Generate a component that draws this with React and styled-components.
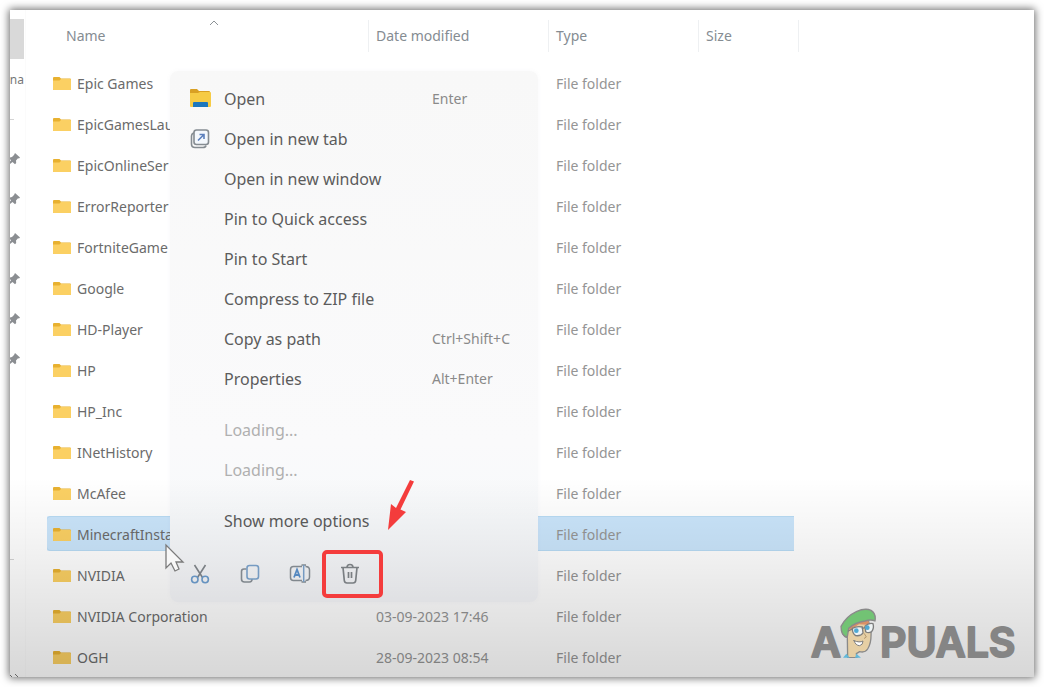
import React from "react";
import styled, { createGlobalStyle, css } from "styled-components";

const GlobalStyle = createGlobalStyle`
  *, *::before, *::after { box-sizing: border-box; }
  body { margin: 0; background: #fff; font-family: "Noto Sans", "Open Sans", sans-serif; }
  button { font: inherit; color: inherit; background: none; border: 0; padding: 0; text-align: left; cursor: pointer; }
`;

const Page = styled.div`
  padding: 10px;
`;

const Window = styled.main`
  position: relative;
  isolation: isolate;
  display: flex;
  min-height: calc(100vh - 20px);
  overflow: hidden;
  background: #fff;
`;

const Frame = styled.div`
  box-shadow: 0 0 8px 1px rgba(0, 0, 0, 0.6);
`;

const Shade = styled.div`
  position: absolute;
  inset: 0;
  pointer-events: none;
  background: linear-gradient(transparent 70%, rgba(0, 0, 0, 0.06) 82%, rgba(0, 0, 0, 0.155));
`;

const Sidebar = styled.nav`
  display: flex;
  flex-direction: column;
  flex: none;
  width: 16px;
  margin-right: 21px;
  padding-top: 9px;
  border-right: 1px solid #fbfbfb;
  overflow: hidden;
`;

const SideItem = styled.div`
  display: flex;
  align-items: center;
  justify-content: ${(p) => (p.$end ? "flex-end" : "flex-start")};
  flex: none;
  width: 14px;
  height: ${(p) => (p.$span || 1) * 40}px;
  background: ${(p) => (p.$active ? "#d9d9d9" : "none")};
  font-size: 12px;
  color: #777;
`;

const Dash = styled.span`
  width: 4px;
  height: 1px;
  background: #d4d4d4;
`;

const SideFoot = styled.div`
  margin-top: auto;
  height: 4px;
`;

const Files = styled.table`
  flex: none;
  align-self: flex-start;
  width: 752px;
  table-layout: fixed;
  border-collapse: separate;
  border-spacing: 0;
`;

const HeadCell = styled.th`
  height: 52px;
  padding: 0;
  font-size: 14px;
  font-weight: 400;
  color: #858c92;
`;

const HeadButton = styled.button`
  position: relative;
  display: flex;
  align-items: center;
  width: 100%;
  height: 32px;
  padding-bottom: 2px;
  padding-left: ${(p) => (p.$wide ? 19 : 7)}px;
  border-right: 1px solid #eef0f2;
`;

const SortMark = styled.svg`
  position: absolute;
  left: 50%;
  top: -1px;
`;

const selected = css`
  background-color: #cae5fb;
  box-shadow: inset 0 1px #b8dbf4, inset 0 -1px #b8dbf4;
`;

const Row = styled.tr`
  td { ${(p) => p.$selected && selected} }
`;

const Cell = styled.td`
  height: 41px;
  padding: 2px 0 0 7px;
  border: 0 solid transparent;
  border-width: 3px 0;
  background-clip: padding-box;
  font-size: 14px;
  line-height: 20px;
  color: #959595;
  &:last-child { border-right-width: 5px; }
`;

const NameCell = styled(Cell)`
  padding-left: 6px;
  color: #6b6b6b;
  border-radius: 4px 0 0 4px;
`;

const FileName = styled.span`
  display: flex;
  align-items: center;
  gap: 6px;
  white-space: nowrap;
`;

const Menu = styled.div`
  position: absolute;
  left: 160px;
  top: 61px;
  display: flex;
  flex-direction: column;
  width: 368px;
  padding: 8px 0;
  border-radius: 8px;
  background: linear-gradient(#f8f8f8, #fafafb 70%, #f7f9fb 85%, #f7f8fb);
  box-shadow: 0 0 4px rgba(140, 140, 150, 0.05);
`;

const MenuGroup = styled.div`
  display: flex;
  flex-direction: column;
  margin-bottom: 11px;
`;

const MenuItem = styled.button`
  display: grid;
  grid-template-columns: 34px 208px 1fr;
  align-items: center;
  height: 40px;
  padding-left: 20px;
  font-size: 16px;
  line-height: 24px;
  color: ${(p) => (p.disabled ? "#b0b0b0" : "#5c5c5c")};
`;

const MenuIcon = styled.span`
  display: flex;
`;

const Shortcut = styled.kbd`
  font-family: inherit;
  font-size: 14px;
  color: #8a8a8a;
`;

const Actions = styled.div`
  display: flex;
  padding: 2px 0 0 5px;
`;

const ActionButton = styled.button`
  position: relative;
  display: flex;
  align-items: center;
  justify-content: center;
  width: 50px;
  height: 40px;
`;

const RedBox = styled.span`
  position: absolute;
  z-index: 1;
  inset: -4px -8px -4px -3px;
  border: 4px solid #f43c3c;
  border-radius: 5px;
`;

const Overlay = styled.svg`
  position: absolute;
  left: ${(p) => p.$x}px;
  top: ${(p) => p.$y}px;
  overflow: visible;
`;

const Brand = styled.svg`
  position: absolute;
  right: 15px;
  bottom: 19px;
  overflow: visible;
`;

const BrandText = styled.text`
  font-family: Inter, sans-serif;
  font-size: 41px;
  font-weight: 600;
  fill: #858585;
  stroke: #858585;
  stroke-width: 2px;
  stroke-linejoin: round;
`;

function Folder() {
  return (
    <svg width="18" height="16" viewBox="0 0 18 16" aria-hidden="true">
      <path d="M0 2a1 1 0 0 1 1-1h5.500l1.500 1.500h9a1 1 0 0 1 1 1v9.500a1 1 0 0 1-1 1H1a1 1 0 0 1-1-1z" fill="#e8b130" />
      <path d="M0 4.500h6.500l1.500-1.500h9a1 1 0 0 1 1 1V13a1 1 0 0 1-1 1H1a1 1 0 0 1-1-1z" fill="#fbd063" />
    </svg>
  );
}

function OpenFolder() {
  return (
    <svg width="21" height="20" viewBox="0 0 21 20" aria-hidden="true">
      <path d="M0 1q0-1 1-1h6l2 2h10q1 0 1 1v6H0z" fill="#d9a023" />
      <path d="M0 4h8l2-1h10q1 0 1 1v13q0 1-1 1H1q-1 0-1-1z" fill="#f6cb45" />
      <path d="M3 18v-4q0-1 1-1h13q1 0 1 1v4z" fill="#1c77bd" />
    </svg>
  );
}

function NewTab() {
  return (
    <svg width="20" height="21" viewBox="0 0 20 21" fill="none" stroke="#858c92" strokeWidth="1.600" aria-hidden="true">
      <path d="M4 4H3.500Q1.500 5 1.500 7v8q0 3.500 3.500 3.500h8q2.500 0 3-2" />
      <rect x="4" y="1" width="14.500" height="14.500" rx="2.500" fill="#f4f8fd" />
      <path d="M8 11.500l6-6M9.500 5.500H14V10" stroke="#5d80bd" />
    </svg>
  );
}

function Pin() {
  return (
    <svg width="11" height="14" viewBox="0 0 11 14" aria-hidden="true">
      <path d="M5 1l5 4.500-1 1-1-.3-2 2.300.2 2.500-1.200 1.200L2.500 10 0 12V9.500L1 8.500 0 7V5.500l2-.5 2-2z" fill="#8b8e92" />
    </svg>
  );
}

function Cut() {
  return (
    <svg width="20" height="22" viewBox="0 0 20 22" fill="none" strokeWidth="1.600" aria-hidden="true">
      <path d="M4.500 2l8 12.500M15.500 2l-8 12.500" stroke="#83888d" />
      <circle cx="4.800" cy="16.500" r="3.200" stroke="#6f9fd0" />
      <circle cx="15.200" cy="16.500" r="3.200" stroke="#6f9fd0" />
    </svg>
  );
}

function Copy() {
  return (
    <svg width="20" height="20" viewBox="0 0 20 20" fill="none" strokeWidth="1.600" aria-hidden="true">
      <path d="M6.500 5H4Q1.500 5 1.500 7.500V15q0 3 3 3h5q2.500 0 2.500-3" stroke="#8b9299" />
      <rect x="7" y="1.500" width="11.500" height="13.500" rx="2.500" stroke="#7ea6d0" />
    </svg>
  );
}

function Rename() {
  return (
    <svg width="22" height="20" viewBox="0 0 22 20" fill="none" strokeWidth="1.500" aria-hidden="true">
      <path d="M13 2.500H4.500q-3 0-3 3v8q0 3 3 3H13M16.500 2.500q4 0 4 3.500v7q0 3.500-4 3.500M12.500 1H17M12.500 18H17" stroke="#8b9299" />
      <path d="M14.700 1v17" stroke="#7ea6d0" />
      <path d="M5 13.500L8 5.500l3 8M6 11h4" stroke="#5b93cf" strokeWidth="1.800" />
    </svg>
  );
}

function Trash() {
  return (
    <svg width="20" height="22" viewBox="0 0 20 22" fill="none" stroke="#83888c" strokeWidth="1.700" aria-hidden="true">
      <path d="M1 4.500h18M7 4.500Q7 1.500 10 1.500t3 3M3 4.500l1.300 13q.3 2.500 2.700 2.500h6q2.400 0 2.700-2.500L17 4.500M8.500 9v6M11.500 9v6" />
    </svg>
  );
}

function Mascot() {
  return (
    <svg x="28" y="0" width="38" height="51" viewBox="118 20 114 153" strokeLinejoin="round" strokeLinecap="round">
      <path d="M144 172L143 112Q126 108 127 84L150 68 205 56 214 92Q216 128 204 146 196 158 180 154L170 160 172 172z" fill="#e6cfa4" stroke="#8a8a8a" strokeWidth="4" />
      <path d="M130 172L140 160 150 172zM166 172L170 160 184 172z" fill="#62b9da" />
      <path d="M146 78L204 58 212 74 178 72 150 90z" fill="#db8f66" />
      <path d="M124 78Q140 48 170 34 196 22 214 30 230 40 226 62 214 56 196 62 166 66 147 84L143 110Q124 108 124 78z" fill="#72c374" stroke="#8a8a8a" strokeWidth="4" />
      <path d="M158 84Q172 76 188 80L190 98Q184 108 168 106 158 100 158 84zM196 78Q208 66 220 70 224 84 216 94 206 100 198 94z" fill="#eef3f4" stroke="#7d7d7d" strokeWidth="4" />
      <path d="M158 86L146 92M188 84L196 82" fill="none" stroke="#7d7d7d" strokeWidth="4" />
      <circle cx="170" cy="91" r="7" fill="#4fa9d3" />
      <circle cx="203" cy="82" r="7" fill="#4fa9d3" />
      <path d="M163 121Q180 128 190 122 190 134 180 136 168 136 163 121z" fill="#fff" stroke="#7d7d7d" strokeWidth="3" />
      <path d="M194 100L200 110 194 114" fill="none" stroke="#b59a70" strokeWidth="3" />
    </svg>
  );
}

const files = [
  { name: "Epic Games" },
  { name: "EpicGamesLau" },
  { name: "EpicOnlineSer" },
  { name: "ErrorReporter" },
  { name: "FortniteGame" },
  { name: "Google" },
  { name: "HD-Player" },
  { name: "HP" },
  { name: "HP_Inc" },
  { name: "INetHistory" },
  { name: "McAfee" },
  { name: "MinecraftInsta", selected: true },
  { name: "NVIDIA" },
  { name: "NVIDIA Corporation", date: "03-09-2023 17:46" },
  { name: "OGH", date: "28-09-2023 08:54" },
];

const commands = [
  { label: "Open", keys: "Enter", icon: <OpenFolder /> },
  { label: "Open in new tab", icon: <NewTab /> },
  { label: "Open in new window" },
  { label: "Pin to Quick access" },
  { label: "Pin to Start" },
  { label: "Compress to ZIP file" },
  { label: "Copy as path", keys: "Ctrl+Shift+C" },
  { label: "Properties", keys: "Alt+Enter" },
];

function Command({ label, keys, icon, disabled }) {
  return (
    <MenuItem type="button" role="menuitem" disabled={disabled}>
      <MenuIcon>{icon}</MenuIcon>
      <span>{label}</span>
      {keys && <Shortcut>{keys}</Shortcut>}
    </MenuItem>
  );
}

function FileTable() {
  return (
    <Files>
      <colgroup>
        <col width="322" />
        <col width="180" />
        <col width="150" />
        <col width="100" />
      </colgroup>
      <thead>
        <tr>
          <HeadCell>
            <HeadButton type="button" $wide>
              Name
              <SortMark width="12" height="8" viewBox="0 0 12 8" fill="none" stroke="#8d9296">
                <path d="M2 6l4-4 4 4" />
              </SortMark>
            </HeadButton>
          </HeadCell>
          <HeadCell><HeadButton type="button">Date modified</HeadButton></HeadCell>
          <HeadCell><HeadButton type="button">Type</HeadButton></HeadCell>
          <HeadCell><HeadButton type="button">Size</HeadButton></HeadCell>
        </tr>
      </thead>
      <tbody>
        {files.map((f) => (
          <Row key={f.name} $selected={f.selected}>
            <NameCell><FileName><Folder />{f.name}</FileName></NameCell>
            <Cell>{f.date}</Cell>
            <Cell>File folder</Cell>
            <Cell />
          </Row>
        ))}
      </tbody>
    </Files>
  );
}

export default function App() {
  return (
    <Page>
      <GlobalStyle />
      <Frame>
        <Window>
          <Sidebar>
            <SideItem $active />
            <SideItem $end>na</SideItem>
            <SideItem><Dash /></SideItem>
            {[0, 1, 2, 3, 4, 5].map((i) => (
              <SideItem key={i}><Pin /></SideItem>
            ))}
            <SideItem $span={4} />
            <SideItem><Dash /></SideItem>
            <SideFoot>
              <svg width="9" height="4" viewBox="0 0 9 4" fill="none" stroke="#777" display="block">
                <path d="M0 2l2 2M5 1l3 3" />
              </svg>
            </SideFoot>
          </Sidebar>
          <FileTable />
          <Menu role="menu">
            <MenuGroup>{commands.map((c) => <Command key={c.label} {...c} />)}</MenuGroup>
            <MenuGroup>
              <Command label="Loading..." disabled />
              <Command label="Loading..." disabled />
            </MenuGroup>
            <MenuGroup><Command label="Show more options" /></MenuGroup>
            <Actions>
              <ActionButton type="button" aria-label="Cut"><Cut /></ActionButton>
              <ActionButton type="button" aria-label="Copy"><Copy /></ActionButton>
              <ActionButton type="button" aria-label="Rename"><Rename /></ActionButton>
              <ActionButton type="button" aria-label="Delete"><Trash /><RedBox /></ActionButton>
            </Actions>
          </Menu>
          <Shade />
          <Overlay $x={155} $y={534} width="20" height="28" viewBox="0 0 20 28" aria-hidden="true">
            <path d="M1 1v23l5-5 4 8 4-2-3-7h7z" fill="#f7f7f7" stroke="#7b7b7b" strokeWidth="1.300" />
          </Overlay>
          <Overlay $x={378} $y={470} width="26" height="50" viewBox="0 0 26 50" aria-hidden="true">
            <path d="M22 0l4 1.500L12.500 29.500 18 32 0 50 3 24l5 4z" fill="#f43c3c" />
          </Overlay>
          <Brand width="208" height="51" viewBox="0 0 208 51">
            <BrandText x="0" y="50">A</BrandText>
            <Mascot />
            <BrandText x="69" y="50">PUALS</BrandText>
          </Brand>
        </Window>
      </Frame>
    </Page>
  );
}
